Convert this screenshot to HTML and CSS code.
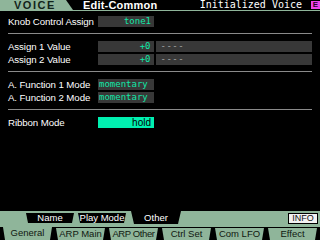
FILE: index.html
```html
<!DOCTYPE html>
<html>
<head>
<meta charset="utf-8">
<link rel="stylesheet" href="styles.css">
</head>
<body>
<div class="screen">
  <header class="top">
    <div class="mode">VOICE</div>
    <div class="page">Edit-Common</div>
    <div class="voice">Initialized Voice</div>
    <div class="badge">E</div>
  </header>
  <main class="params">
    <div class="row first"><span class="label">Knob Control Assign</span><span class="val right">tone1</span></div>
    <div class="sep"></div>
    <div class="row"><span class="label">Assign 1 Value</span><span class="val right">+0</span><span class="val wide dim">----</span></div>
    <div class="row"><span class="label">Assign 2 Value</span><span class="val right">+0</span><span class="val wide dim">----</span></div>
    <div class="sep"></div>
    <div class="row"><span class="label">A. Function 1 Mode</span><span class="val">momentary</span></div>
    <div class="row"><span class="label">A. Function 2 Mode</span><span class="val">momentary</span></div>
    <div class="sep"></div>
    <div class="row"><span class="label">Ribbon Mode</span><span class="val right hot">hold</span></div>
  </main>
  <footer class="tabs">
    <div class="upper">
      <span class="utab">Name</span>
      <span class="utab">Play Mode</span>
      <span class="utab sel">Other</span>
      <span class="info">INFO</span>
    </div>
    <div class="lower">
      <span class="ltab sel">General</span>
      <span class="ltab">ARP Main</span>
      <span class="ltab tight">ARP Other</span>
      <span class="ltab">Ctrl Set</span>
      <span class="ltab">Com LFO</span>
      <span class="ltab">Effect</span>
    </div>
  </footer>
</div>
</body>
</html>
```

FILE: styles.css
```css
html, body {
  margin: 0;
  padding: 0;
  background: #000;
}
.screen {
  width: 320px;
  height: 240px;
  display: flex;
  flex-direction: column;
  background: #000;
  color: #fff;
  font-family: "Liberation Sans", Arial, sans-serif;
  overflow: hidden;
}
.top {
  display: flex;
  height: 10px;
  border-bottom: 1px solid #8fb59a;
  align-items: stretch;
}
.mode {
  width: 59px;
  padding-left: 14px;
  background: #8fb59a;
  clip-path: polygon(0 0, 66px 0, 73px 100%, 0 100%);
  color: #12241a;
  font-weight: bold;
  font-size: 11px;
  letter-spacing: 1.5px;
  line-height: 10px;
}
.page {
  margin-left: 10px;
  font-weight: bold;
  font-size: 11px;
  line-height: 10px;
  letter-spacing: 0.2px;
}
.voice {
  margin-left: auto;
  margin-right: 9px;
  font-family: "DejaVu Sans Mono", monospace;
  font-size: 10px;
  line-height: 10px;
}
.badge {
  width: 9px;
  height: 8px;
  margin-top: 1px;
  background: #ee44ee;
  color: #2a002a;
  font-weight: bold;
  font-size: 8px;
  line-height: 8px;
  text-align: center;
}
.params {
  display: flex;
  flex-direction: column;
  padding: 0 8px;
}
.row {
  display: flex;
  height: 11px;
  align-items: center;
  gap: 2px;
}
.row.first {
  margin-top: 5px;
}
.row + .row {
  margin-top: 2px;
}
.sep {
  height: 1px;
  width: 304px;
  background: #8a8a8a;
  margin: 6px 0 7px;
}
.label {
  width: 88px;
  font-size: 9.7px;
  line-height: 11px;
  letter-spacing: -0.1px;
}
.val {
  width: 54px;
  height: 11px;
  padding: 0 1px;
  background: #383838;
  color: #10e8a8;
  font-family: "DejaVu Sans Mono", monospace;
  font-size: 9px;
  line-height: 11px;
  white-space: nowrap;
}
.val.right {
  text-align: right;
  padding-right: 3px;
  width: 52px;
}
.val.wide {
  width: 151px;
  padding-left: 5px;
  color: #a8a8a8;
  letter-spacing: 0.5px;
}
.val.hot {
  background: #00f0b0;
  color: #000;
  font-family: "Liberation Sans", Arial, sans-serif;
  font-size: 10px;
}
.tabs {
  margin-top: auto;
  display: flex;
  flex-direction: column;
}
.upper {
  display: flex;
  align-items: flex-start;
  height: 16px;
  background: #8fb59a;
  padding-left: 26px;
  gap: 4px;
}
.utab {
  width: 48px;
  height: 10px;
  margin-top: 2px;
  background: #000;
  color: #fff;
  font-size: 9.5px;
  line-height: 10px;
  text-align: center;
  white-space: nowrap;
  clip-path: polygon(0 0, 100% 0, calc(100% - 2px) 100%, 2px 100%);
}
.utab.sel {
  width: 50px;
  height: 13px;
  margin-top: 0;
  margin-left: 1px;
  line-height: 13px;
  clip-path: polygon(0 0, 100% 0, calc(100% - 3px) 100%, 3px 100%);
}
.info {
  margin-left: auto;
  margin-right: 2px;
  margin-top: 2px;
  width: 28px;
  height: 9px;
  border: 1px solid #000;
  background: #f2f2f2;
  color: #111;
  font-size: 9px;
  line-height: 9px;
  text-align: center;
}
.lower {
  display: flex;
  height: 13px;
  background: #000;
  padding-left: 3px;
  gap: 4px;
}
.ltab {
  width: 49px;
  height: 12px;
  margin-top: 1px;
  background: #8fb59a;
  color: #101810;
  font-size: 9.5px;
  line-height: 11px;
  text-align: center;
  white-space: nowrap;
  clip-path: polygon(0 0, 100% 0, calc(100% - 2px) 100%, 2px 100%);
}
.ltab.tight {
  letter-spacing: -0.4px;
}
.ltab.sel {
  height: 13px;
  margin-top: 0;
  line-height: 12px;
}
```
